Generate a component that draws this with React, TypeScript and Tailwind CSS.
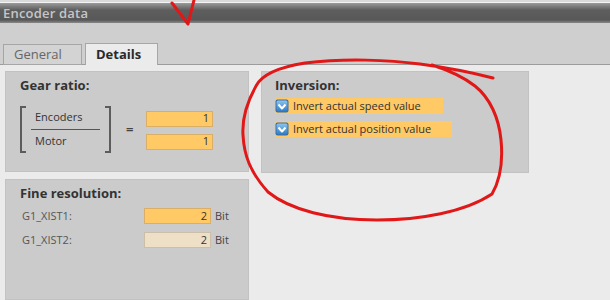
import React from "react";

const font = { fontFamily: '"Open Sans", "Noto Sans", "DejaVu Sans", sans-serif' };

function Check() {
  return (
    <svg width="14" height="14" viewBox="0 0 14 14" className="shrink-0">
      <defs>
        <linearGradient id="cb" x1="0" y1="0" x2="0" y2="1">
          <stop offset="0" stopColor="#8cc4ee" />
          <stop offset="1" stopColor="#2c7cc8" />
        </linearGradient>
      </defs>
      <rect x="0.5" y="0.5" width="13" height="13" rx="2" fill="#3a6fa8" />
      <rect x="1.5" y="1.5" width="11" height="11" rx="1.5" fill="url(#cb)" />
      <path d="M3.5 5.5 L7 9.5 L10.5 5.5" fill="none" stroke="#ffffff" strokeWidth="2" strokeLinejoin="round" />
    </svg>
  );
}

function Field({ value, light }: { value: string; light?: boolean }) {
  return (
    <div
      className={
        "w-[67px] h-[16px] flex items-center justify-end pr-[3px] text-[11px] text-[#333] border " +
        (light ? "bg-[#eedfc7] border-[#cbbfa9]" : "bg-[#ffc965] border-[#d9ae66]")
      }
    >
      {value}
    </div>
  );
}

export default function App() {
  return (
    <div className="w-[610px] h-[300px] overflow-hidden relative bg-[#ebebeb] flex flex-col" style={font}>
      <div className="h-[3px] bg-[#dadada] border-b border-[#f4f4f4] shrink-0" />
      <div className="h-[20px] shrink-0 bg-[linear-gradient(#9a9a9a,#5e5e5e_35%,#585858_85%,#8a8a8a)] flex items-center pl-[3px]">
        <span className="text-[13px] font-semibold text-[#c6c6c6] leading-none tracking-[0.2px]">Encoder data</span>
      </div>
      <div className="h-[42px] shrink-0 bg-[#cfcfcf] flex items-end pl-[3px] border-b border-[#9c9c9c]">
        <div className="w-[79px] h-[21px] mb-[-1px] bg-[#d3d3d3] border border-[#a6a6a6] flex items-center pl-[10px] text-[13px] text-[#666]">
          General
        </div>
        <div className="w-[73px] h-[22px] ml-[3px] mb-[-1px] bg-[#ebebeb] border border-b-0 border-[#a6a6a6] flex items-center pl-[10px] text-[13px] font-bold text-[#2a2a2a]">
          Details
        </div>
      </div>
      <div className="flex pl-[5px] pt-[6px] gap-[12px] grow">
        <div className="w-[244px] flex flex-col gap-[7px]">
          <div className="h-[101px] bg-[#cbcbcb] border border-[#c2c2c2] pl-[14px] pt-[4px]">
            <div className="text-[13px] font-bold text-[#333] leading-[18px]">Gear ratio:</div>
            <div className="flex items-center mt-[12px]">
              <div className="w-[6px] h-[47px] border-l-2 border-t-2 border-b-2 border-[#5c5c5c]" />
              <div className="w-[79px] flex flex-col">
                <div className="h-[23px] mx-[5px] border-b border-[#555] flex items-center pl-[4px] text-[11px] text-[#333]">Encoders</div>
                <div className="h-[23px] flex items-center pl-[9px] text-[11px] text-[#333]">Motor</div>
              </div>
              <div className="w-[6px] h-[47px] border-r-2 border-t-2 border-b-2 border-[#5c5c5c]" />
              <div className="ml-[15px] w-[20px] text-[13px] font-bold text-[#444]">=</div>
              <div className="flex flex-col gap-[7px] mt-[1px]">
                <Field value="1" />
                <Field value="1" />
              </div>
            </div>
          </div>
          <div className="grow bg-[#cbcbcb] border border-[#c2c2c2] pl-[14px] pt-[4px]">
            <div className="text-[13px] font-bold text-[#333] leading-[18px]">Fine resolution:</div>
            <div className="flex items-center mt-[6px]">
              <div className="w-[124px] pl-[2px] text-[11px] text-[#555]">G1_XIST1:</div>
              <Field value="2" />
              <span className="ml-[4px] text-[11px] text-[#444]">Bit</span>
            </div>
            <div className="flex items-center mt-[7px]">
              <div className="w-[124px] pl-[2px] text-[11px] text-[#555]">G1_XIST2:</div>
              <Field value="2" light />
              <span className="ml-[4px] text-[11px] text-[#444]">Bit</span>
            </div>
          </div>
        </div>
        <div className="self-start w-[268px] h-[102px] bg-[#cbcbcb] border border-[#c2c2c2] pl-[13px] pt-[4px]">
          <div className="text-[13px] font-bold text-[#333] leading-[18px]">Inversion:</div>
          <div className="flex flex-col items-start gap-[7px] mt-[4px]">
            <div className="h-[16px] w-[168px] bg-[#ffc965] flex items-center">
              <Check />
              <span className="ml-[4px] text-[11px] text-[#333]">Invert actual speed value</span>
            </div>
            <div className="h-[16px] w-[177px] bg-[#ffc965] flex items-center">
              <Check />
              <span className="ml-[4px] text-[11px] text-[#333]">Invert actual position value</span>
            </div>
          </div>
        </div>
      </div>
      <svg className="absolute inset-0 pointer-events-none" width="610" height="300" viewBox="0 0 610 300">
        <g fill="none" stroke="#e01818" strokeWidth="3" strokeLinecap="round" strokeLinejoin="round">
          <path d="M172 3 L188 24 L194 0" />
          <path d="M493 78 C470 72 450 68 420 64 C390 60 345 58 305 63 C280 67 262 74 256 86 C246 104 242 120 243 135 C244 155 250 172 268 192 C290 210 330 220 377 220 C420 220 465 212 492 194 C500 180 503 160 501 140 C499 118 490 98 475 86 C462 76 448 70 432 65" />
        </g>
      </svg>
    </div>
  );
}
